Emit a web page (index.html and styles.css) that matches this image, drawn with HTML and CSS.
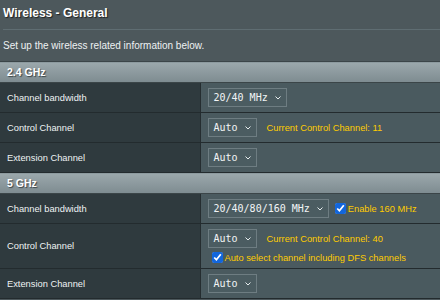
FILE: index.html
```html
<!DOCTYPE html>
<html lang="en">
<head>
    <meta charset="UTF-8">
    <title>Wireless - General</title>
    <link rel="stylesheet" href="styles.css">
</head>
<body>

    <!-- Page heading -->
    <div class="page-head">
        <h2>Wireless - General</h2>
        <div class="divider"></div>
        <p class="intro">Set up the wireless related information below.</p>
    </div>

    <table class="settings">
        <colgroup>
            <col class="label-col">
            <col>
        </colgroup>

        <!-- 2.4 GHz band -->
        <tr>
            <th colspan="2">2.4 GHz</th>
        </tr>
        <tr>
            <td class="label">Channel bandwidth</td>
            <td class="value">
                <div class="inline">
                    <span class="select">20/40 MHz
                        <svg width="6" height="4" viewBox="0 0 6 4"><path d="M0.5 0.5 L3 3 L5.5 0.5" fill="none" stroke="#e8eef0" stroke-width="1"/></svg>
                    </span>
                </div>
            </td>
        </tr>
        <tr>
            <td class="label">Control Channel</td>
            <td class="value">
                <div class="inline">
                    <span class="select">Auto
                        <svg width="6" height="4" viewBox="0 0 6 4"><path d="M0.5 0.5 L3 3 L5.5 0.5" fill="none" stroke="#e8eef0" stroke-width="1"/></svg>
                    </span>
                    <span class="hint">Current Control Channel: 11</span>
                </div>
            </td>
        </tr>
        <tr>
            <td class="label">Extension Channel</td>
            <td class="value">
                <div class="inline">
                    <span class="select">Auto
                        <svg width="6" height="4" viewBox="0 0 6 4"><path d="M0.5 0.5 L3 3 L5.5 0.5" fill="none" stroke="#e8eef0" stroke-width="1"/></svg>
                    </span>
                </div>
            </td>
        </tr>

        <!-- 5 GHz band -->
        <tr>
            <th colspan="2">5 GHz</th>
        </tr>
        <tr>
            <td class="label">Channel bandwidth</td>
            <td class="value">
                <div class="inline">
                    <span class="select">20/40/80/160 MHz
                        <svg width="6" height="4" viewBox="0 0 6 4"><path d="M0.5 0.5 L3 3 L5.5 0.5" fill="none" stroke="#e8eef0" stroke-width="1"/></svg>
                    </span>
                    <label class="check">
                        <input type="checkbox" checked>
                        <span class="hint">Enable 160 MHz</span>
                    </label>
                </div>
            </td>
        </tr>
        <tr>
            <td class="label">Control Channel</td>
            <td class="value">
                <div class="inline">
                    <span class="select">Auto
                        <svg width="6" height="4" viewBox="0 0 6 4"><path d="M0.5 0.5 L3 3 L5.5 0.5" fill="none" stroke="#e8eef0" stroke-width="1"/></svg>
                    </span>
                    <span class="hint">Current Control Channel: 40</span>
                </div>
                <label class="check second">
                    <input type="checkbox" checked>
                    <span class="hint">Auto select channel including DFS channels</span>
                </label>
            </td>
        </tr>
        <tr>
            <td class="label">Extension Channel</td>
            <td class="value">
                <div class="inline">
                    <span class="select">Auto
                        <svg width="6" height="4" viewBox="0 0 6 4"><path d="M0.5 0.5 L3 3 L5.5 0.5" fill="none" stroke="#e8eef0" stroke-width="1"/></svg>
                    </span>
                </div>
            </td>
        </tr>
    </table>

</body>
</html>
```

FILE: styles.css
```css
/* Base */
body {
    margin: 0;
    background-color: #4d585c;
    font-family: "Liberation Sans", Arial, sans-serif;
    color: #ffffff;
}

/* Heading area */
.page-head {
    padding: 6px 0 8px 3px;
}

.page-head h2 {
    margin: 0;
    font-size: 12px;
    line-height: 14px;
    font-weight: bold;
    text-shadow: 1px 1px 1px #222;
}

.divider {
    height: 1px;
    margin-top: 9px;
    background-color: #5f6d72;
}

.intro {
    margin: 9px 0 0 0;
    font-size: 10px;
    line-height: 14px;
    color: #eef2f3;
}

/* Settings table */
.settings {
    width: 100%;
    border-collapse: collapse;
    table-layout: fixed;
}

.label-col {
    width: 200px;
}

.settings th {
    height: 20px;
    padding: 0 0 0 7px;
    text-align: left;
    font-size: 10.5px;
    font-weight: bold;
    color: #ffffff;
    text-shadow: 1px 1px 1px #3a4447;
    background: linear-gradient(#9ba8ac, #7d8b90);
    border-top: 1px solid #3b4548;
    border-bottom: 1px solid #3b4548;
}

.settings td {
    border-bottom: 1px solid #232b2e;
    font-size: 9.3px;
}

.label {
    background-color: #2f3a3e;
    border-right: 1px solid #252d30;
    padding: 0 0 0 7px;
    color: #eef2f3;
}

.value {
    background-color: #4a5a5f;
    padding: 5px 7px;
}

.inline {
    display: flex;
    align-items: center;
    gap: 10px;
}

/* Fake select box */
.select {
    display: inline-flex;
    align-items: center;
    gap: 7px;
    height: 17px;
    padding: 0 5px;
    border: 1px solid #6e7d82;
    background-color: #4b5c61;
    font-family: "DejaVu Sans Mono", monospace;
    font-size: 10px;
    color: #f2f5f6;
    white-space: nowrap;
}

.hint {
    color: #ffcc00;
    white-space: nowrap;
}

.check {
    display: inline-flex;
    align-items: center;
    gap: 2px;
    margin-left: -4px;
}

.check input {
    width: 11px;
    height: 11px;
    margin: 0;
    accent-color: #1266dc;
}

.check.second {
    display: flex;
    margin: 4px 0 0 4px;
}
```
